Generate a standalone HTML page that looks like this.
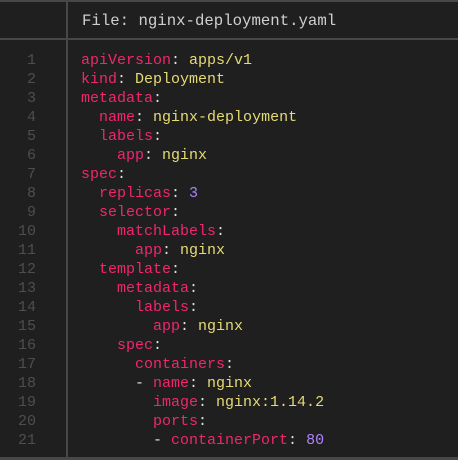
<html><head><style>
body{margin:0;width:458px;height:460px;background:#1f1f1f;overflow:hidden;font-family:"Liberation Mono",monospace;font-size:15px}
.t{position:absolute;left:0;top:0;width:458px;height:2px;background:#474747}
.b{position:absolute;left:0;top:457px;width:458px;height:3px;background:#474747}
.v{position:absolute;left:66px;top:0;width:2px;height:460px;background:#474747}
.h{position:absolute;left:0;top:38px;width:458px;height:2px;background:#474747}
.f{position:absolute;left:82px;top:11px;color:#cfcfcf;line-height:20px;font-size:15.7px}
.n{position:absolute;left:0;width:36px;text-align:right;top:51px;color:#4e4e4e;line-height:19px;white-space:pre}
.c{position:absolute;left:81px;top:51px;color:#e0e0e0;line-height:19px;white-space:pre}
.k{color:#f0266f}.s{color:#e6db74}.m{color:#ae81ff}
</style></head><body>
<div class="t"></div><div class="b"></div><div class="v"></div><div class="h"></div>
<div class="f">File: nginx-deployment.yaml</div>
<div class="n">1
2
3
4
5
6
7
8
9
10
11
12
13
14
15
16
17
18
19
20
21</div>
<div class="c"><span class="k">apiVersion</span>: <span class="s">apps/v1</span>
<span class="k">kind</span>: <span class="s">Deployment</span>
<span class="k">metadata</span>:
  <span class="k">name</span>: <span class="s">nginx-deployment</span>
  <span class="k">labels</span>:
    <span class="k">app</span>: <span class="s">nginx</span>
<span class="k">spec</span>:
  <span class="k">replicas</span>: <span class="m">3</span>
  <span class="k">selector</span>:
    <span class="k">matchLabels</span>:
      <span class="k">app</span>: <span class="s">nginx</span>
  <span class="k">template</span>:
    <span class="k">metadata</span>:
      <span class="k">labels</span>:
        <span class="k">app</span>: <span class="s">nginx</span>
    <span class="k">spec</span>:
      <span class="k">containers</span>:
      - <span class="k">name</span>: <span class="s">nginx</span>
        <span class="k">image</span>: <span class="s">nginx:1.14.2</span>
        <span class="k">ports</span>:
        - <span class="k">containerPort</span>: <span class="m">80</span></div>
</body></html>
